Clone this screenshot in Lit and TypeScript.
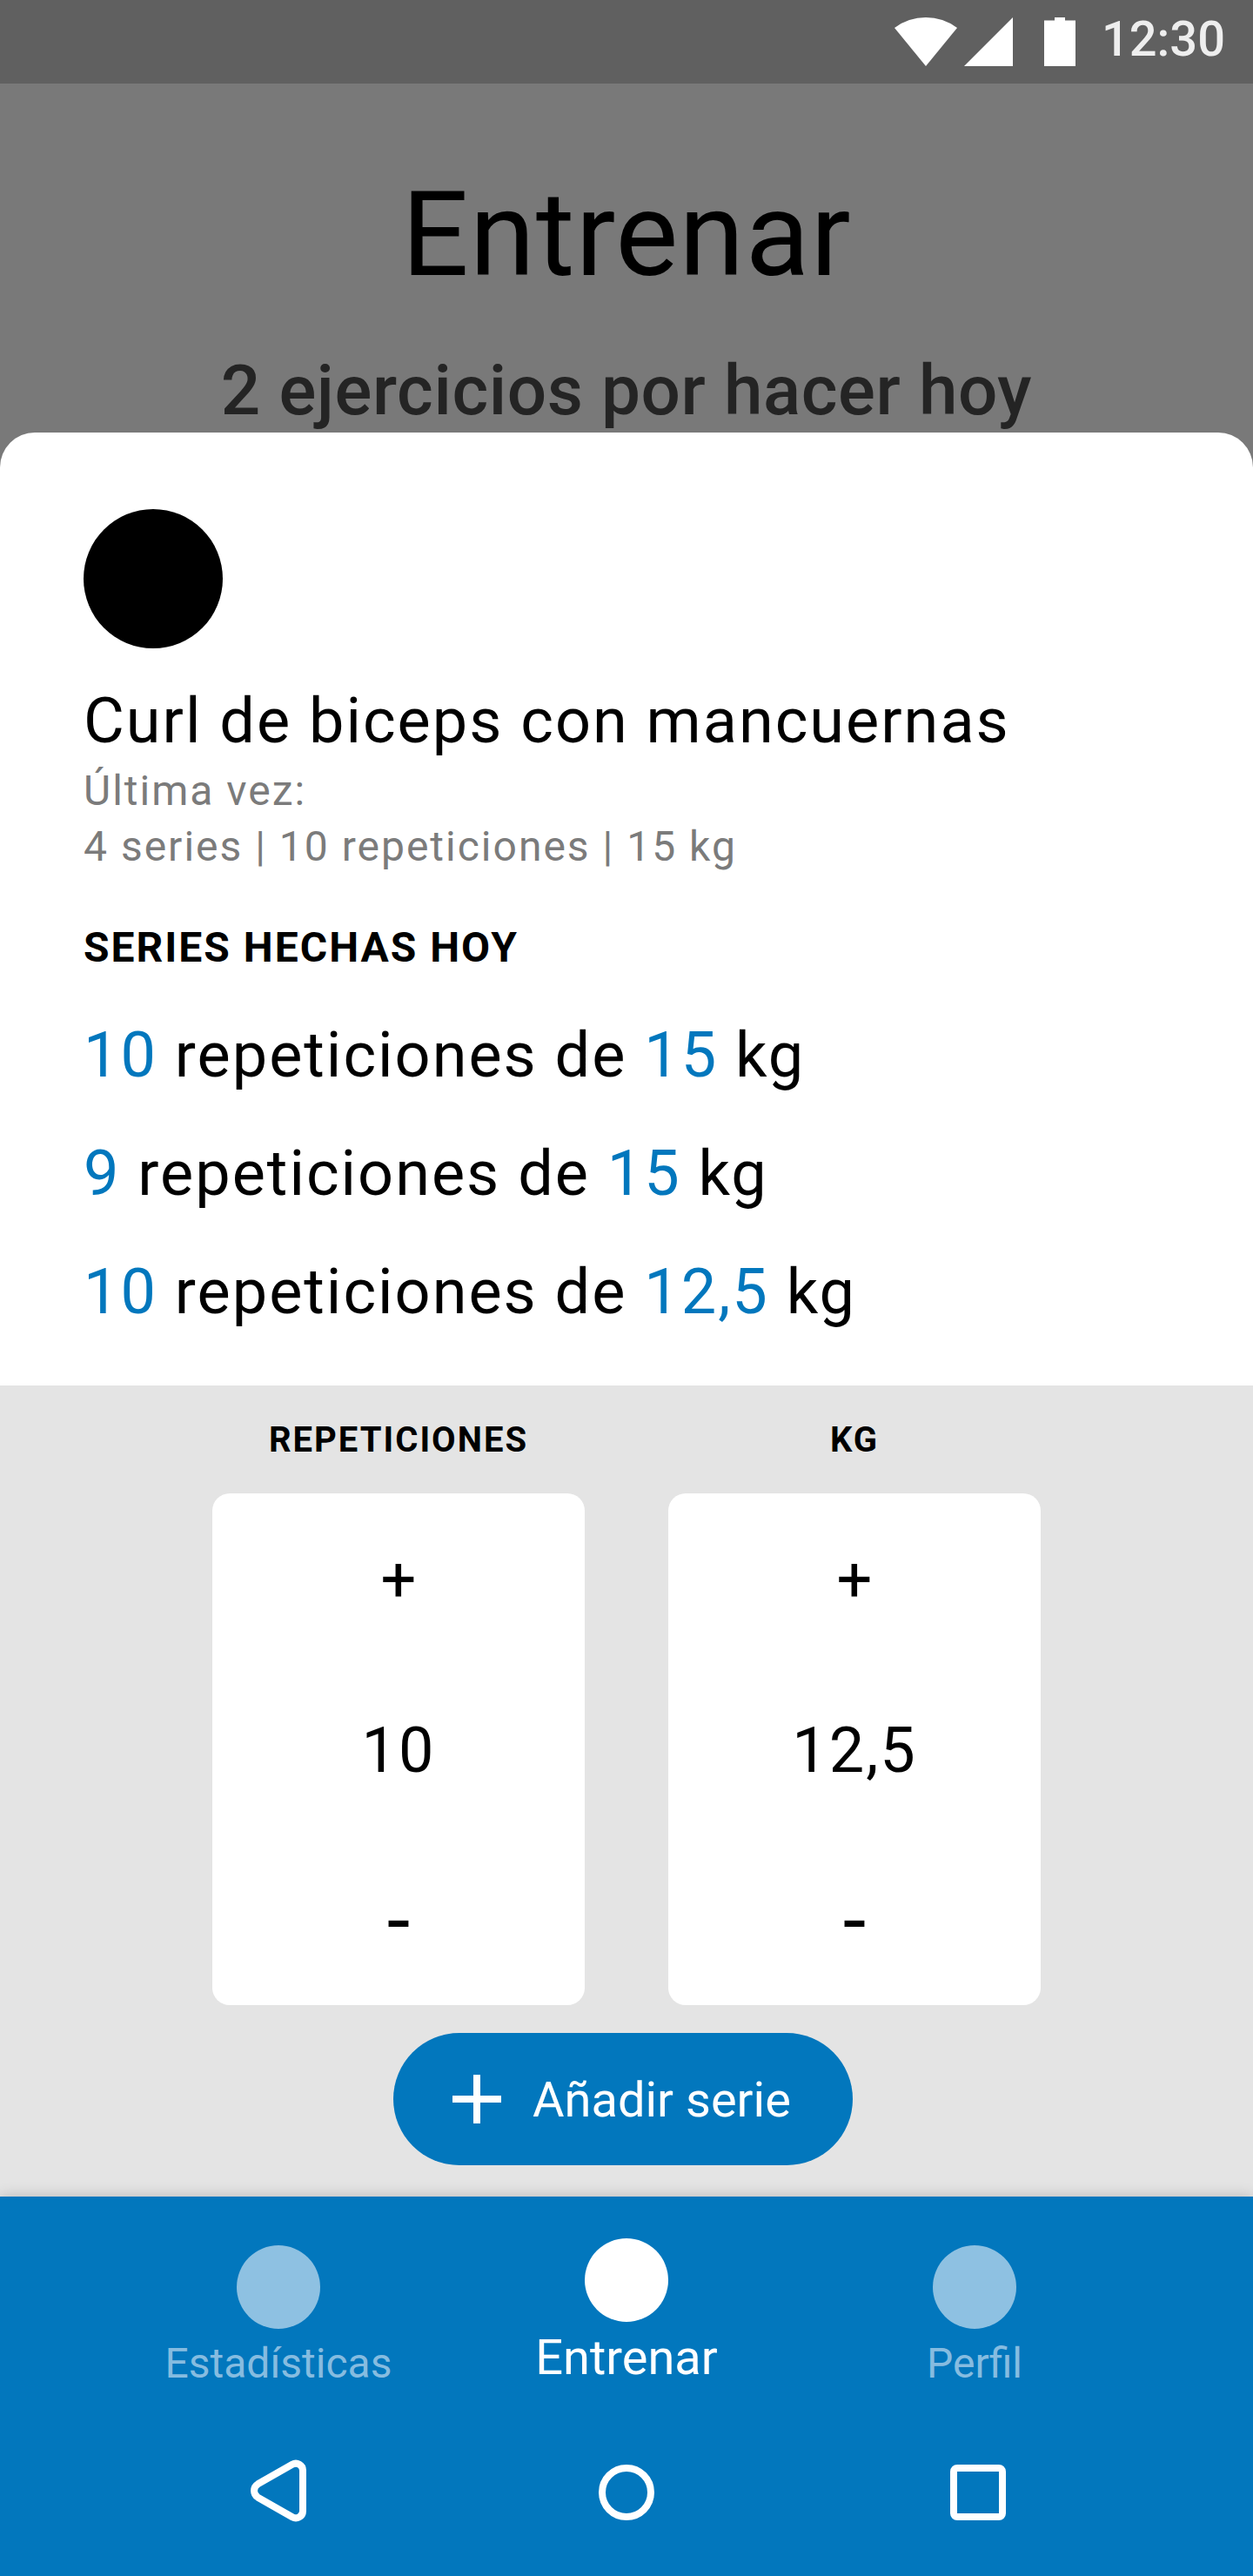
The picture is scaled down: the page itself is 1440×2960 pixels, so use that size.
import { LitElement, html, css } from 'lit';
import { customElement, property, state } from 'lit/decorators.js';
import { classMap } from 'lit/directives/class-map.js';

interface WorkoutSet {
  reps: number;
  kg: number;
}

const formatNumber = (n: number) => String(n).replace('.', ',');

@customElement('status-bar')
class StatusBar extends LitElement {
  static styles = css`
    :host {
      display: flex;
      justify-content: flex-end;
      height: 96px;
      padding-right: 32px;
      box-sizing: border-box;
      background: #606060;
    }
    .icon {
      display: block;
      flex: none;
      margin-top: 20px;
      fill: #fff;
    }
    .wifi {
      margin-right: 8px;
    }
    .signal {
      margin-right: 36px;
    }
    .battery {
      margin-right: 30px;
    }
    .clock {
      font-weight: 500;
      font-size: 56px;
      line-height: 90px;
      color: #eeeeee;
    }
  `;

  render() {
    return html`
      <svg class="icon wifi" width="72" height="56" viewBox="0 0 72 56">
        <path d="M36 56L0 12A60 60 0 0 1 72 12Z" />
      </svg>
      <svg class="icon signal" width="56" height="56" viewBox="0 0 56 56">
        <path d="M0 56H56V0Z" />
      </svg>
      <svg class="icon battery" width="36" height="56" viewBox="0 0 36 56">
        <path d="M0 3.6H12V0H24V3.6H36V56H0Z" />
      </svg>
      <span class="clock">12:30</span>
    `;
  }
}

@customElement('value-stepper')
class ValueStepper extends LitElement {
  @property() label = '';
  @property({ type: Number }) value = 0;
  @property({ type: Number }) step = 1;

  static styles = css`
    :host {
      display: flex;
      flex-direction: column;
      align-items: center;
      gap: 37.5px;
      width: 428px;
    }
    .label {
      font-weight: 700;
      font-size: 40px;
      line-height: 48px;
      letter-spacing: 2px;
    }
    .card {
      display: grid;
      grid-template-rows: repeat(3, 1fr);
      width: 100%;
      height: 588px;
      padding-top: 3px;
      box-sizing: border-box;
      border-radius: 20px;
      background: #fff;
    }
    .cell {
      display: flex;
      align-items: center;
      justify-content: center;
      padding: 0;
      border: 0;
      background: none;
      color: #000;
      font-family: inherit;
      font-size: 72px;
      line-height: 96px;
    }
    .value {
      letter-spacing: 2px;
    }
    .plus {
      padding-bottom: 4px;
    }
    .minus {
      padding-top: 1px;
      font-size: 96px;
    }
  `;

  private change(delta: number) {
    const value = Math.max(0, this.value + delta);
    this.dispatchEvent(new CustomEvent('value-change', { detail: value }));
  }

  render() {
    return html`
      <span class="label">${this.label}</span>
      <div class="card">
        <button class="cell plus" @click=${() => this.change(this.step)}>+</button>
        <span class="cell value">${formatNumber(this.value)}</span>
        <button class="cell minus" @click=${() => this.change(-this.step)}>-</button>
      </div>
    `;
  }
}

@customElement('bottom-nav')
class BottomNav extends LitElement {
  @state() private active = 'Entrenar';

  static styles = css`
    :host {
      display: block;
      position: relative;
      height: 436px;
      background: #0277bd;
      box-shadow: 0 0 16px rgba(0, 0, 0, 0.2);
    }
    .tabs {
      display: grid;
      grid-template-columns: repeat(3, 400px);
      justify-content: center;
      height: 308px;
    }
    .tab {
      display: flex;
      flex-direction: column;
      align-items: center;
      gap: 11.5px;
      padding: 56px 0 0;
      border: 0;
      background: none;
      font-family: inherit;
      font-size: 48px;
      line-height: 56px;
      color: #86bce0;
    }
    .dot {
      width: 96px;
      height: 96px;
      border-radius: 50%;
      background: #8ec1e2;
    }
    .tab.active {
      gap: 9px;
      padding-top: 48px;
      font-size: 56px;
      line-height: 64px;
      color: #fff;
    }
    .tab.active .dot {
      background: #fff;
    }
    .system {
      display: flex;
      padding-left: 288px;
    }
    .sys {
      display: block;
      flex: none;
      width: 64px;
      height: 64px;
      fill: none;
      stroke: #fff;
      stroke-width: 8;
    }
    .back {
      height: 72px;
      margin: -6px 336px 0 0;
    }
    .home {
      margin-right: 340px;
    }
    .recents {
      fill: #fff;
      stroke: none;
    }
  `;

  render() {
    return html`
      <div class="tabs">
        ${['Estadísticas', 'Entrenar', 'Perfil'].map(
          (name) => html`
            <button
              class=${classMap({ tab: true, active: name === this.active })}
              @click=${() => (this.active = name)}
            >
              <span class="dot"></span>
              <span>${name}</span>
            </button>
          `
        )}
      </div>
      <div class="system">
        <svg class="sys back" viewBox="0 0 64 72">
          <path
            d="M60 12.7V59.3A8 8 0 0 1 47.9 66.2L8.4 43.7A9 9 0 0 1 8.4 28.3L47.9 5.8A8 8 0 0 1 60 12.7Z"
          />
        </svg>
        <svg class="sys home" viewBox="0 0 64 64"><circle cx="32" cy="32" r="28" /></svg>
        <svg class="sys recents" viewBox="0 0 64 64">
          <path
            fill-rule="evenodd"
            d="M8 0H56A8 8 0 0 1 64 8V56A8 8 0 0 1 56 64H8A8 8 0 0 1 0 56V8A8 8 0 0 1 8 0ZM8 8V56H56V8Z"
          />
        </svg>
      </div>
    `;
  }
}

@customElement('app-root')
class AppRoot extends LitElement {
  @state() private sets: WorkoutSet[] = [
    { reps: 10, kg: 15 },
    { reps: 9, kg: 15 },
    { reps: 10, kg: 12.5 },
  ];
  @state() private reps = 10;
  @state() private kg = 12.5;

  static styles = css`
    :host {
      display: flex;
      flex-direction: column;
      width: 1440px;
      height: 2960px;
      overflow: hidden;
      background: #797979;
      color: #000;
      font-family: Roboto, 'Liberation Sans', sans-serif;
    }
    h1,
    h2,
    h3,
    p,
    ul {
      margin: 0;
      padding: 0;
      font-weight: 400;
      list-style: none;
    }
    .title {
      margin-top: 94px;
      font-size: 136px;
      line-height: 160px;
      letter-spacing: 1px;
      text-align: center;
    }
    .subtitle {
      margin-top: 51px;
      height: 95.5px;
      font-weight: 500;
      font-size: 80px;
      line-height: 96px;
      letter-spacing: 0.6px;
      text-align: center;
      color: #242424;
    }
    .sheet {
      flex: 1;
      display: flex;
      flex-direction: column;
      border-radius: 40px 40px 0 0;
      background: #fff;
    }
    .exercise {
      height: 1095.5px;
      padding: 88.5px 96px 0;
      box-sizing: border-box;
      letter-spacing: 2px;
    }
    .avatar {
      width: 160px;
      height: 160px;
      border-radius: 50%;
      background: #000;
    }
    .name {
      margin-top: 35.5px;
      font-size: 72px;
      line-height: 96px;
    }
    .last {
      font-size: 48px;
      line-height: 64px;
      color: #7b7b7b;
    }
    .heading {
      margin-top: 52px;
      font-weight: 700;
      font-size: 48px;
      line-height: 64px;
    }
    .sets {
      margin-top: 24px;
      font-size: 72px;
      line-height: 136px;
    }
    .num {
      color: #0277bd;
    }
    .editor {
      flex: 1;
      padding-top: 38.5px;
      background: #e4e4e4;
    }
    .steppers {
      display: flex;
      justify-content: center;
      gap: 96px;
    }
    .add {
      display: flex;
      align-items: center;
      gap: 36px;
      width: 528px;
      height: 152px;
      margin: 32px 0 0 452px;
      padding: 0 0 0 68px;
      border: 0;
      border-radius: 76px;
      background: #0277bd;
      color: #fff;
      font-family: inherit;
      font-size: 56px;
      line-height: 64px;
    }
    .add-icon {
      display: block;
      flex: none;
      fill: #fff;
    }
    .add-label {
      padding-top: 2px;
    }
  `;

  private addSet() {
    this.sets = [...this.sets, { reps: this.reps, kg: this.kg }];
  }

  render() {
    return html`
      <status-bar></status-bar>
      <h1 class="title">Entrenar</h1>
      <p class="subtitle">2 ejercicios por hacer hoy</p>
      <section class="sheet">
        <div class="exercise">
          <div class="avatar"></div>
          <h2 class="name">Curl de biceps con mancuernas</h2>
          <p class="last">Última vez:<br />4 series | 10 repeticiones | 15 kg</p>
          <h3 class="heading">SERIES HECHAS HOY</h3>
          <ul class="sets">
            ${this.sets.map(
              (s) => html`<li>
                <span class="num">${s.reps}</span> repeticiones de
                <span class="num">${formatNumber(s.kg)}</span> kg
              </li>`
            )}
          </ul>
        </div>
        <div class="editor">
          <div class="steppers">
            <value-stepper
              label="REPETICIONES"
              .value=${this.reps}
              @value-change=${(e: CustomEvent) => (this.reps = e.detail)}
            ></value-stepper>
            <value-stepper
              label="KG"
              .value=${this.kg}
              .step=${2.5}
              @value-change=${(e: CustomEvent) => (this.kg = e.detail)}
            ></value-stepper>
          </div>
          <button class="add" @click=${this.addSet}>
            <svg class="add-icon" width="56" height="56" viewBox="0 0 56 56">
              <path d="M24 0H32V24H56V32H32V56H24V32H0V24H24Z" />
            </svg>
            <span class="add-label">Añadir serie</span>
          </button>
        </div>
      </section>
      <bottom-nav></bottom-nav>
    `;
  }
}
